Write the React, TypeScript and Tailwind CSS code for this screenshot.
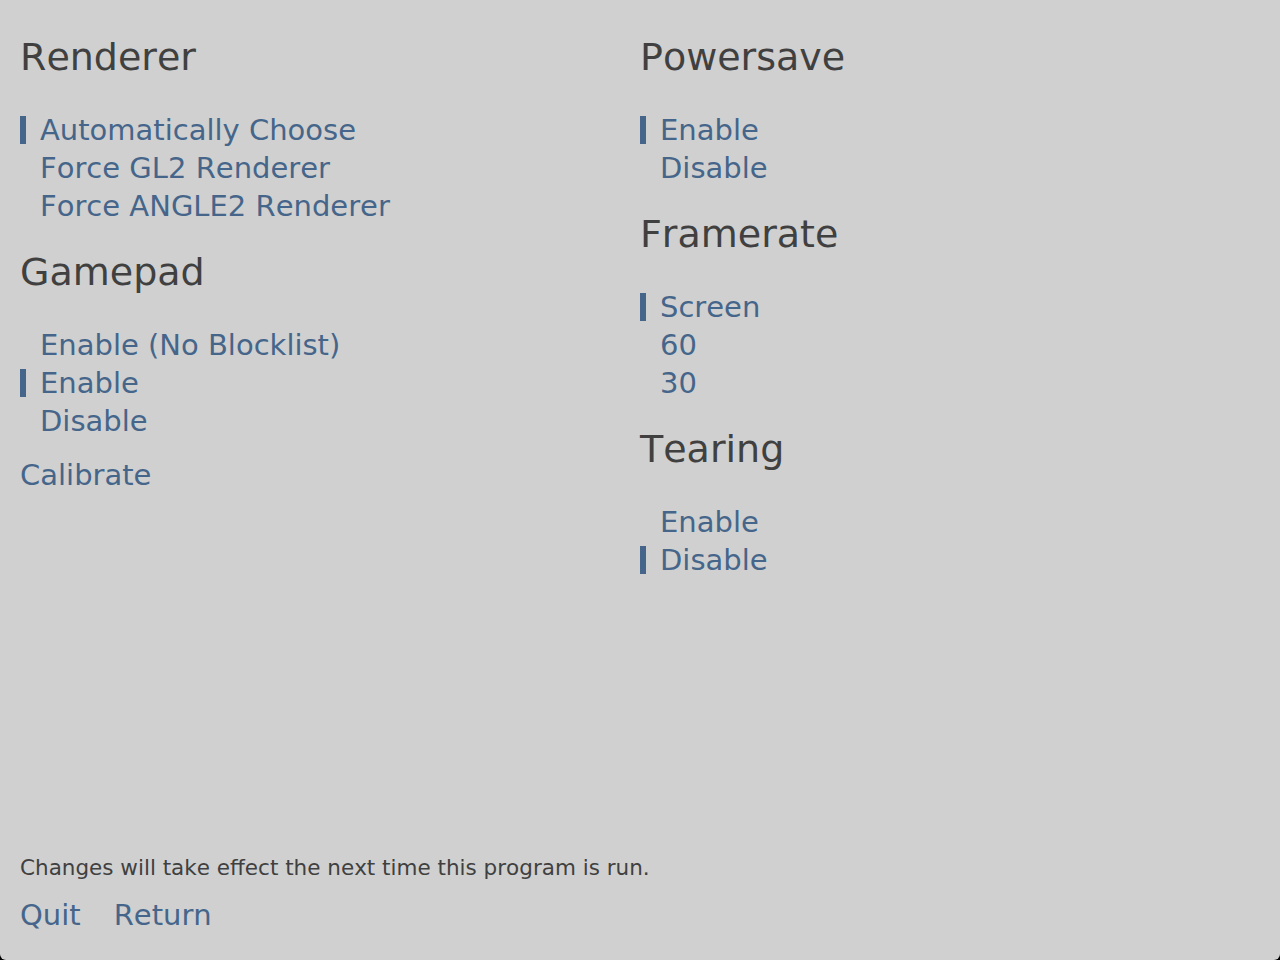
import React from 'react'

type Option = { label: string; selected?: boolean }
type Section = { title: string; options: Option[] }

const left: Section[] = [
  {
    title: 'Renderer',
    options: [
      { label: 'Automatically Choose', selected: true },
      { label: 'Force GL2 Renderer' },
      { label: 'Force ANGLE2 Renderer' },
    ],
  },
  {
    title: 'Gamepad',
    options: [
      { label: 'Enable (No Blocklist)' },
      { label: 'Enable', selected: true },
      { label: 'Disable' },
    ],
  },
]

const right: Section[] = [
  {
    title: 'Powersave',
    options: [{ label: 'Enable', selected: true }, { label: 'Disable' }],
  },
  {
    title: 'Framerate',
    options: [{ label: 'Screen', selected: true }, { label: '60' }, { label: '30' }],
  },
  {
    title: 'Tearing',
    options: [{ label: 'Enable' }, { label: 'Disable', selected: true }],
  },
]

function OptionGroup({ section, first }: { section: Section; first: boolean }) {
  return (
    <div className={first ? '' : 'mt-[24px]'}>
      <h2 className="text-[38px] leading-[46px] text-[#404040] mb-[31px] whitespace-nowrap">{section.title}</h2>
      <div className="flex flex-col">
        {section.options.map((opt) => (
          <div key={opt.label} className="relative h-[38px] pl-[20px] text-[29px] leading-[38px] text-[#45668a] whitespace-nowrap">
            {opt.selected && <span className="absolute left-0 top-[5px] w-[6px] h-[28px] bg-[#45668a]" />}
            {opt.label}
          </div>
        ))}
      </div>
    </div>
  )
}

export default function App() {
  return (
    <div className="bg-black w-[1280px] h-[960px]">
      <div className="w-[1280px] h-[960px] bg-[#d0d0d0] rounded-b-[6px] flex flex-col px-[20px] pt-[34px] pb-[26px] font-['DejaVu_Sans',sans-serif] [font-kerning:none]">
        <div className="grid grid-cols-2">
          <div className="flex flex-col">
            {left.map((s, i) => (
              <OptionGroup key={s.title} section={s} first={i === 0} />
            ))}
            <div className="mt-[16px] text-[29px] leading-[38px] text-[#45668a]">Calibrate</div>
          </div>
          <div className="flex flex-col">
            {right.map((s, i) => (
              <OptionGroup key={s.title} section={s} first={i === 0} />
            ))}
          </div>
        </div>
        <div className="mt-auto">
          <p className="text-[21.5px] leading-[30px] text-[#404040]">Changes will take effect the next time this program is run.</p>
          <div className="mt-[13px] flex gap-[33px] text-[29px] leading-[38px] text-[#45668a]">
            <span>Quit</span>
            <span>Return</span>
          </div>
        </div>
      </div>
    </div>
  )
}
